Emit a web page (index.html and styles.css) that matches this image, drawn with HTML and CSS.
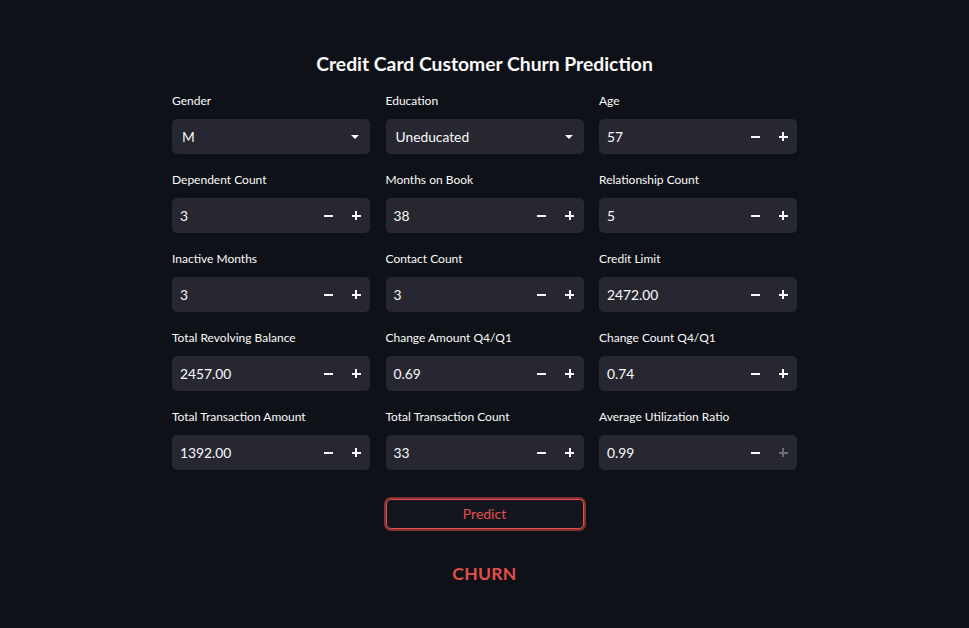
FILE: index.html
```html
<!DOCTYPE html>
<html lang="en">
<head>
<meta charset="utf-8">
<title>Credit Card Customer Churn Prediction</title>
<link rel="stylesheet" href="styles.css">
</head>
<body>
<main class="app">
  <h1 class="title">Credit Card Customer Churn Prediction</h1>
  <div class="grid">
    <div class="field">
      <label class="label">Gender</label>
      <div class="select"><span class="value">M</span><span class="caret"></span></div>
    </div>
    <div class="field">
      <label class="label">Education</label>
      <div class="select"><span class="value">Uneducated</span><span class="caret"></span></div>
    </div>
    <div class="field">
      <label class="label">Age</label>
      <div class="number"><span class="value">57</span><span class="step minus"></span><span class="step plus"></span></div>
    </div>

    <div class="field">
      <label class="label">Dependent Count</label>
      <div class="number"><span class="value">3</span><span class="step minus"></span><span class="step plus"></span></div>
    </div>
    <div class="field">
      <label class="label">Months on Book</label>
      <div class="number"><span class="value">38</span><span class="step minus"></span><span class="step plus"></span></div>
    </div>
    <div class="field">
      <label class="label">Relationship Count</label>
      <div class="number"><span class="value">5</span><span class="step minus"></span><span class="step plus"></span></div>
    </div>

    <div class="field">
      <label class="label">Inactive Months</label>
      <div class="number"><span class="value">3</span><span class="step minus"></span><span class="step plus"></span></div>
    </div>
    <div class="field">
      <label class="label">Contact Count</label>
      <div class="number"><span class="value">3</span><span class="step minus"></span><span class="step plus"></span></div>
    </div>
    <div class="field">
      <label class="label">Credit Limit</label>
      <div class="number"><span class="value">2472.00</span><span class="step minus"></span><span class="step plus"></span></div>
    </div>

    <div class="field">
      <label class="label">Total Revolving Balance</label>
      <div class="number"><span class="value">2457.00</span><span class="step minus"></span><span class="step plus"></span></div>
    </div>
    <div class="field">
      <label class="label">Change Amount Q4/Q1</label>
      <div class="number"><span class="value">0.69</span><span class="step minus"></span><span class="step plus"></span></div>
    </div>
    <div class="field">
      <label class="label">Change Count Q4/Q1</label>
      <div class="number"><span class="value">0.74</span><span class="step minus"></span><span class="step plus"></span></div>
    </div>

    <div class="field">
      <label class="label">Total Transaction Amount</label>
      <div class="number"><span class="value">1392.00</span><span class="step minus"></span><span class="step plus"></span></div>
    </div>
    <div class="field">
      <label class="label">Total Transaction Count</label>
      <div class="number"><span class="value">33</span><span class="step minus"></span><span class="step plus"></span></div>
    </div>
    <div class="field">
      <label class="label">Average Utilization Ratio</label>
      <div class="number"><span class="value">0.99</span><span class="step minus"></span><span class="step plus disabled"></span></div>
    </div>

    <div class="button-cell">
      <button class="predict" type="button">Predict</button>
    </div>
  </div>
  <p class="result">CHURN</p>
</main>
</body>
</html>
```

FILE: styles.css
```css
* { box-sizing: border-box; }

html, body {
  margin: 0;
  padding: 0;
  background: #0e1117;
  color: #fafafa;
  font-family: "Source Sans Pro", "Lato", "Noto Sans", sans-serif;
}

.app {
  width: 625px;
  margin: 0 auto;
  padding-top: 50px;
}

.title {
  margin: 0 0 14px 0;
  text-align: center;
  font-size: 19.3px;
  line-height: 28px;
  font-weight: 700;
}

.grid {
  display: grid;
  grid-template-columns: repeat(3, 198px);
  column-gap: 15.5px;
  row-gap: 17px;
}

.field {
  display: flex;
  flex-direction: column;
  gap: 9px;
}

.label {
  font-size: 12px;
  line-height: 18px;
  color: #fafafa;
}

.select, .number {
  height: 35px;
  background: #262730;
  border-radius: 5px;
  display: flex;
  align-items: center;
  font-size: 13.8px;
}

.select { padding: 0 11px 0 10px; }
.number { padding: 0 0 0 8px; }

.value { flex: 1; }

.caret {
  width: 0;
  height: 0;
  border-left: 4px solid transparent;
  border-right: 4px solid transparent;
  border-top: 4px solid #fafafa;
}

.step {
  position: relative;
  width: 28px;
  height: 100%;
}

.step::before,
.step::after {
  content: "";
  position: absolute;
  left: 50%;
  top: 50%;
  background: #fafafa;
}

.minus::before,
.plus::before {
  width: 9px;
  height: 2px;
  margin: -1px 0 0 -4.5px;
}

.minus::after { display: none; }

.plus::after {
  width: 2px;
  height: 9px;
  margin: -4.5px 0 0 -1px;
}

.plus.disabled::before,
.plus.disabled::after { background: #6b6d76; }

.button-cell {
  grid-column: 2;
  padding-top: 12px;
}

.predict {
  display: block;
  width: 198px;
  height: 30px;
  padding: 0 0 2px 0;
  background: #13161e;
  color: #e24e4b;
  border: 1px solid #e24e4b;
  border-radius: 5px;
  box-shadow: 0 0 0 2px rgba(226, 78, 75, 0.55);
  font-family: inherit;
  font-size: 14px;
  cursor: pointer;
}

.result {
  margin: 32px 0 0 0;
  text-align: center;
  color: #e24e4b;
  font-weight: 700;
  font-size: 17.5px;
  line-height: 26px;
  letter-spacing: 0.3px;
}
```
